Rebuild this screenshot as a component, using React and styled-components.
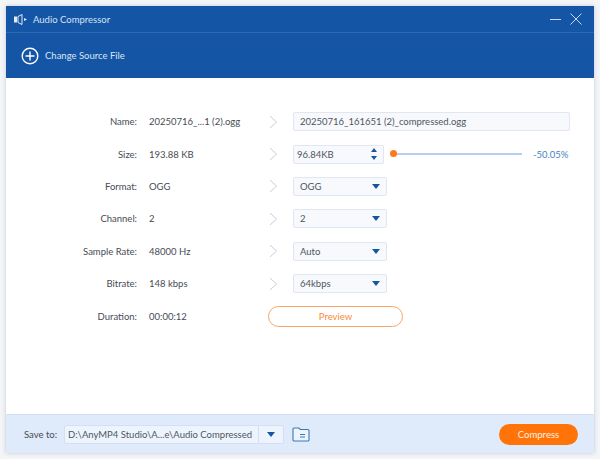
import React from "react";
import styled, { createGlobalStyle } from "styled-components";

const GlobalStyle = createGlobalStyle`
  html, body {
    margin: 0;
    padding: 0;
    background: #f4f5f7;
  }
  body {
    font-family: Lato, "Liberation Sans", sans-serif;
    font-size: 9.5px;
    color: #454c54;
  }
`;

const Page = styled.div`
  width: 600px;
  height: 459px;
  padding: 6px;
  box-sizing: border-box;
`;

const Window = styled.div`
  width: 588px;
  height: 447px;
  display: flex;
  flex-direction: column;
  background: #fff;
  box-shadow: 0 0 4px rgba(120, 140, 175, 0.45);
`;

const TitleBar = styled.div`
  height: 27px;
  flex: none;
  display: flex;
  align-items: center;
  padding: 0 12px 0 8px;
  gap: 5px;
  background: #1555a5;
  border-bottom: 1px solid #2c69b4;
  box-sizing: border-box;
  color: #d5e2f3;
`;

const Title = styled.span`
  flex: 1;
`;

const WindowButtons = styled.div`
  display: flex;
  align-items: center;
  gap: 9px;
`;

const Toolbar = styled.div`
  height: 45px;
  flex: none;
  display: flex;
  align-items: center;
  gap: 6px;
  padding: 0 0 0 15px;
  background: #1555a5;
  color: #d9e5f4;
`;

const Content = styled.div`
  flex: 1;
  padding-top: 27.5px;
  display: grid;
  grid-template-columns: 131px 123px 20px 1fr;
  grid-auto-rows: 32.4px;
  align-items: center;
`;

const Label = styled.div`
  text-align: right;
`;

const Value = styled.div`
  padding-left: 12px;
`;

const Arrow = styled.svg`
  width: 9px;
  height: 14px;
  margin-left: 9px;
`;

const ControlCell = styled.div`
  display: flex;
  align-items: center;
  padding-left: 13px;
`;

const Field = styled.div`
  width: ${(p) => p.$width}px;
  height: 19px;
  box-sizing: border-box;
  display: flex;
  align-items: center;
  justify-content: space-between;
  padding: 0 ${(p) => p.$right ?? 6}px 0 ${(p) => p.$left ?? 6}px;
  background: #f7f9fd;
  border: 1px solid #e0e7f3;
  border-radius: 2px;
  color: #4f565e;
`;

const DownTriangle = styled.span`
  width: 0;
  height: 0;
  border-left: 4px solid transparent;
  border-right: 4px solid transparent;
  border-top: 5px solid #1555a5;
`;

const Spinner = styled.div`
  display: flex;
  flex-direction: column;
  gap: 4px;
`;

const SpinUp = styled.span`
  width: 0;
  height: 0;
  border-left: 3.5px solid transparent;
  border-right: 3.5px solid transparent;
  border-bottom: 4px solid #1555a5;
`;

const SpinDown = styled(SpinUp)`
  border-bottom: none;
  border-top: 4px solid #1555a5;
`;

const Slider = styled.div`
  width: 132px;
  height: 2px;
  margin-left: 6px;
  background: #b4d0ee;
  position: relative;
`;

const Knob = styled.span`
  position: absolute;
  left: 0;
  top: -3px;
  width: 7px;
  height: 7px;
  border-radius: 50%;
  background: #ff7a1a;
`;

const Percent = styled.span`
  margin-left: 11px;
  color: #4a7fc0;
`;

const PreviewButton = styled.button`
  width: 135px;
  height: 21px;
  margin-left: -25px;
  padding: 0;
  font: inherit;
  color: #fb8b3a;
  background: #fff;
  border: 1px solid #f9a566;
  border-radius: 11px;
`;

const Footer = styled.div`
  height: 39px;
  flex: none;
  display: flex;
  align-items: center;
  padding: 0 16px 0 18px;
  background: #dfeafa;
  border-top: 1px solid #d3e0f3;
  box-sizing: border-box;
`;

const SaveLabel = styled.span`
  flex: none;
  width: 40px;
`;

const PathField = styled.div`
  flex: none;
  width: 194px;
  height: 19px;
  display: flex;
  align-items: center;
  padding: 0 3px;
  box-sizing: border-box;
  background: #eef4fd;
  border: 1px solid #d4e0f2;
  border-right: none;
  border-radius: 2px 0 0 2px;
  color: #4f565e;
  white-space: nowrap;
`;

const PathDrop = styled.div`
  flex: none;
  width: 26px;
  height: 19px;
  display: flex;
  align-items: center;
  justify-content: center;
  box-sizing: border-box;
  background: #eef4fd;
  border: 1px solid #d4e0f2;
  border-radius: 0 2px 2px 0;
`;

const FolderIcon = styled.svg`
  flex: none;
  width: 18px;
  height: 15px;
  margin-left: 8px;
`;

const CompressButton = styled.button`
  margin-left: auto;
  width: 79px;
  height: 21px;
  padding: 0;
  font: inherit;
  color: #fff2e6;
  background: #ff7308;
  border: none;
  border-radius: 11px;
`;

const rows = [
  { label: "Format:", value: "OGG", control: "OGG" },
  { label: "Channel:", value: "2", control: "2" },
  { label: "Sample Rate:", value: "48000 Hz", control: "Auto" },
  { label: "Bitrate:", value: "148 kbps", control: "64kbps" },
];

const Chevron = () => (
  <Arrow viewBox="0 0 9 14">
    <path d="M1 1l6.5 6L1 13" fill="none" stroke="#c3cfe0" strokeWidth="1" />
  </Arrow>
);

export default function App() {
  return (
    <Page>
      <GlobalStyle />
      <Window>
        <TitleBar>
          <svg width="14" height="11" viewBox="0 0 14 11">
            <rect x="0" y="2.5" width="3" height="6" fill="#e3ecf7" />
            <path d="M4 2.5L8 .5v10L4 8.5z" fill="none" stroke="#e3ecf7" />
            <path d="M10 4l3 1.5L10 7z" fill="#e3ecf7" />
          </svg>
          <Title>Audio Compressor</Title>
          <WindowButtons>
            <svg width="11" height="11" viewBox="0 0 11 11">
              <path d="M0 5.5h11" stroke="#c9d9ee" strokeWidth="1" />
            </svg>
            <svg width="12" height="12" viewBox="0 0 12 12">
              <path d="M.5.5l11 11M11.5.5l-11 11" stroke="#c9d9ee" strokeWidth="1" />
            </svg>
          </WindowButtons>
        </TitleBar>
        <Toolbar>
          <svg width="18" height="18" viewBox="0 0 18 18">
            <circle cx="9" cy="9" r="7.8" fill="none" stroke="#fff" strokeWidth="1.4" />
            <path d="M9 4.5v9M4.5 9h9" stroke="#fff" strokeWidth="1.4" />
          </svg>
          Change Source File
        </Toolbar>
        <Content>
          <Label>Name:</Label>
          <Value>20250716_...1 (2).ogg</Value>
          <Chevron />
          <ControlCell>
            <Field $width={277}>20250716_161651 (2)_compressed.ogg</Field>
          </ControlCell>

          <Label>Size:</Label>
          <Value>193.88 KB</Value>
          <Chevron />
          <ControlCell>
            <Field $width={91} $left={3}>
              96.84KB
              <Spinner>
                <SpinUp />
                <SpinDown />
              </Spinner>
            </Field>
            <Slider>
              <Knob />
            </Slider>
            <Percent>-50.05%</Percent>
          </ControlCell>

          {rows.map((row) => (
            <React.Fragment key={row.label}>
              <Label>{row.label}</Label>
              <Value>{row.value}</Value>
              <Chevron />
              <ControlCell>
                <Field $width={94}>
                  {row.control}
                  <DownTriangle />
                </Field>
              </ControlCell>
            </React.Fragment>
          ))}

          <Label>Duration:</Label>
          <Value>00:00:12</Value>
          <span />
          <ControlCell>
            <PreviewButton>Preview</PreviewButton>
          </ControlCell>
        </Content>
        <Footer>
          <SaveLabel>Save to:</SaveLabel>
          <PathField>D:\AnyMP4 Studio\A...e\Audio Compressed</PathField>
          <PathDrop>
            <DownTriangle />
          </PathDrop>
          <FolderIcon viewBox="0 0 18 15">
            <path
              d="M1 3.5V2.2C1 1.5 1.5 1 2.2 1h4.6l1.5 1.5h7.5c.7 0 1.2.5 1.2 1.2v9c0 .7-.5 1.3-1.2 1.3H2.2C1.5 14 1 13.4 1 12.7z"
              fill="#eef4fd"
              stroke="#3a78bd"
              strokeWidth="1.1"
            />
            <path d="M8 7.5h5M8 10h5" stroke="#3a78bd" strokeWidth="1" />
          </FolderIcon>
          <CompressButton>Compress</CompressButton>
        </Footer>
      </Window>
    </Page>
  );
}
